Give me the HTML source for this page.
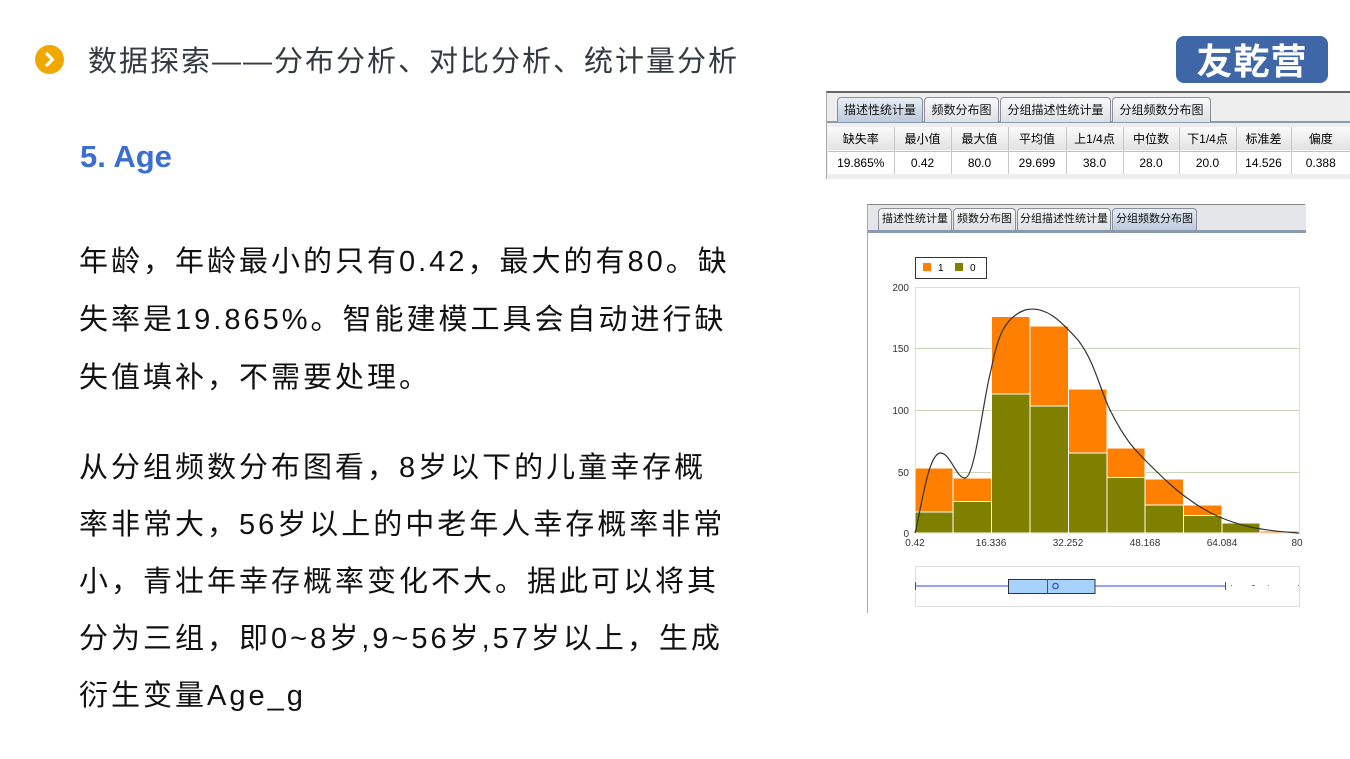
<!DOCTYPE html>
<html><head><meta charset="utf-8"><style>
*{margin:0;padding:0;box-sizing:border-box}
body{width:1350px;height:759px;background:#fff;position:relative;overflow:hidden;font-family:"Liberation Sans","Noto Sans CJK SC",sans-serif}
.abs{position:absolute}
.title{left:88px;top:38px;font-size:29px;color:#333a40;white-space:nowrap;letter-spacing:2px}
.h{left:80px;top:139px;font-size:31px;font-weight:bold;color:#3a6fcf}
.p{left:79px;font-size:29px;color:#111;white-space:nowrap;line-height:58px;letter-spacing:3px}
.logo{left:1176px;top:36px;width:152px;height:47px;background:#3f67a8;border-radius:8px;color:#fff;font-size:36px;font-weight:bold;text-align:center;line-height:47px;letter-spacing:1px;font-family:"Noto Sans CJK SC",sans-serif}
.tab{position:absolute;top:0;height:25px;border:1px solid #8a8f99;border-bottom:none;border-radius:4px 4px 0 0;background:linear-gradient(#fafafa,#dde0e5);font-size:12px;text-align:center;line-height:24px;color:#111}
.tab.on{background:linear-gradient(#e6eef6,#bccadb)}
table{border-collapse:collapse;font-size:12px}
td{text-align:center;border-right:1px solid #c8c8c8;padding:0}
</style></head><body>
<div class="abs" style="left:35px;top:45px;width:29px;height:29px;border-radius:50%;background:#f0a800"></div>
<svg class="abs" style="left:35px;top:45px" width="29" height="29"><path d="M12 9 L17.5 14.5 L12 20" stroke="#fff" stroke-width="3.2" fill="none" stroke-linecap="round" stroke-linejoin="round"/></svg>
<div class="abs title">数据探索——分布分析、对比分析、统计量分析</div>
<div class="abs logo">友乾营</div>
<div class="abs h">5. Age</div>
<div class="abs p" style="top:233px">年龄，年龄最小的只有0.42，最大的有80。缺<br>失率是19.865%。智能建模工具会自动进行缺<br>失值填补，不需要处理。</div>
<div class="abs p" style="top:440px;line-height:57px">从分组频数分布图看，8岁以下的儿童幸存概<br>率非常大，56岁以上的中老年人幸存概率非常<br>小，青壮年幸存概率变化不大。据此可以将其<br>分为三组，即0~8岁,9~56岁,57岁以上，生成<br>衍生变量Age_g</div>

<!-- table panel -->
<div class="abs" style="left:826px;top:91px;width:524px;height:88px;background:#eeeeee;border-top:2px solid #666;border-left:1px solid #aaa">
 <div class="abs" style="left:0;top:28px;width:524px;height:2px;background:#8a9bb0"></div>
 <div class="tab on" style="left:10px;top:4px;width:86px">描述性统计量</div>
 <div class="tab" style="left:97px;top:4px;width:75px">频数分布图</div>
 <div class="tab" style="left:173px;top:4px;width:111px">分组描述性统计量</div>
 <div class="tab" style="left:285px;top:4px;width:99px">分组频数分布图</div>
 <table class="abs" style="left:1px;top:34px;width:523px">
  <tr style="height:24px;background:linear-gradient(#fbfbfb,#e2e2e2);border-bottom:1px solid #c0c0c0"><td style="width:66px">缺失率</td><td style="width:57px">最小值</td><td style="width:57px">最大值</td><td style="width:58px">平均值</td><td style="width:57px">上1/4点</td><td style="width:56px">中位数</td><td style="width:57px">下1/4点</td><td style="width:55px">标准差</td><td>偏度</td></tr>
  <tr style="height:23px;background:#fff"><td>19.865%</td><td>0.42</td><td>80.0</td><td>29.699</td><td>38.0</td><td>28.0</td><td>20.0</td><td>14.526</td><td>0.388</td></tr>
 </table>
</div>

<!-- chart panel -->
<div class="abs" style="left:867px;top:204px;width:438px;height:409px;background:#fff;border-left:1px solid #aaa;border-top:1px solid #888">
 <div class="abs" style="left:0;top:0;width:438px;height:27px;background:#e4e6ea"></div>
 <div class="abs" style="left:0;top:25px;width:438px;height:3px;background:#8a9bb0"></div>
 <div class="tab" style="left:10px;top:3px;width:74px;font-size:11px;height:22px;line-height:21px">描述性统计量</div>
 <div class="tab" style="left:85px;top:3px;width:63px;font-size:11px;height:22px;line-height:21px">频数分布图</div>
 <div class="tab" style="left:149px;top:3px;width:94px;font-size:11px;height:22px;line-height:21px">分组描述性统计量</div>
 <div class="tab on" style="left:244px;top:3px;width:85px;font-size:11px;height:22px;line-height:21px">分组频数分布图</div>
</div>
<svg class="abs" style="left:0;top:0" width="1350" height="759" font-family="Liberation Sans, sans-serif" font-size="10">
 <rect x="915.5" y="257.5" width="71" height="21" fill="#fff" stroke="#333"/>
 <rect x="923" y="263" width="8" height="8" fill="#ff8000"/><text x="938" y="271" font-size="10">1</text>
 <rect x="955" y="263" width="8" height="8" fill="#808000"/><text x="970" y="271" font-size="10">0</text>
 <rect x="915.5" y="287.5" width="384" height="246" fill="#fff" stroke="#ddd"/>
 <g stroke="#c8d4b8"><line x1="915" y1="348.5" x2="1299" y2="348.5"/><line x1="915" y1="410.5" x2="1299" y2="410.5"/><line x1="915" y1="472.5" x2="1299" y2="472.5"/></g>
 <g fill="#333" text-anchor="end"><text x="909" y="291">200</text><text x="909" y="352">150</text><text x="909" y="414">100</text><text x="909" y="476">50</text><text x="909" y="537">0</text></g>
 <g fill="#333" text-anchor="middle"><text x="915" y="546">0.42</text><text x="991" y="546">16.336</text><text x="1068" y="546">32.252</text><text x="1145" y="546">48.168</text><text x="1222" y="546">64.084</text><text x="1297" y="546">80</text></g>
 <g stroke="#fff" stroke-width="1">
  <rect x="915" y="468" width="38" height="65" fill="#ff8000"/><rect x="915" y="512" width="38" height="21" fill="#808000"/>
  <rect x="953" y="478" width="38.5" height="55" fill="#ff8000"/><rect x="953" y="501.5" width="38.5" height="31.5" fill="#808000"/>
  <rect x="991.5" y="316.5" width="38.5" height="216.5" fill="#ff8000"/><rect x="991.5" y="394" width="38.5" height="139" fill="#808000"/>
  <rect x="1030" y="326" width="38.5" height="207" fill="#ff8000"/><rect x="1030" y="406" width="38.5" height="127" fill="#808000"/>
  <rect x="1068.5" y="389" width="38.5" height="144" fill="#ff8000"/><rect x="1068.5" y="453" width="38.5" height="80" fill="#808000"/>
  <rect x="1107" y="448" width="38" height="85" fill="#ff8000"/><rect x="1107" y="477.5" width="38" height="55.5" fill="#808000"/>
  <rect x="1145" y="479" width="38.5" height="54" fill="#ff8000"/><rect x="1145" y="505" width="38.5" height="28" fill="#808000"/>
  <rect x="1183.5" y="505" width="38.5" height="28" fill="#ff8000"/><rect x="1183.5" y="515.5" width="38.5" height="17.5" fill="#808000"/>
  <rect x="1222" y="523" width="38" height="10" fill="#808000"/>
  <rect x="1260" y="531" width="38" height="2" fill="#ff8000"/>
 </g>
 <path d="M915 533 C922 505,928 455,940 453 C950 452,956 478,965 478 C975 478,983 400,991 370 C997 340,1003 318,1025 310 C1045 305,1060 320,1078 340 C1095 362,1100 390,1110 410 C1125 440,1135 450,1145 460 C1160 475,1175 490,1190 500 C1210 515,1230 522,1250 527 C1270 531,1285 532,1299 533" fill="none" stroke="#333" stroke-width="1.2"/>
 <rect x="915.5" y="566.5" width="384" height="40" fill="#fff" stroke="#ddd"/>
 <line x1="915" y1="586" x2="1008" y2="586" stroke="#3344ee"/><line x1="1095" y1="586" x2="1226" y2="586" stroke="#3344ee"/>
 <line x1="915.5" y1="582" x2="915.5" y2="590" stroke="#3344ee"/><line x1="1225.5" y1="582" x2="1225.5" y2="590" stroke="#3344ee"/>
 <rect x="1008.5" y="579.5" width="86.5" height="14" fill="#a6d2fb" stroke="#333"/>
 <line x1="1047.5" y1="579" x2="1047.5" y2="594" stroke="#3344ee"/>
 <circle cx="1055.5" cy="586" r="2.7" fill="none" stroke="#3344ee" stroke-width="1.2"/>
 <g fill="#777"><rect x="1231" y="585" width="1" height="1"/><rect x="1252" y="585" width="3" height="1"/><rect x="1268" y="585" width="1" height="1"/><rect x="1298" y="585" width="1" height="1"/></g>
</svg>
</body></html>
